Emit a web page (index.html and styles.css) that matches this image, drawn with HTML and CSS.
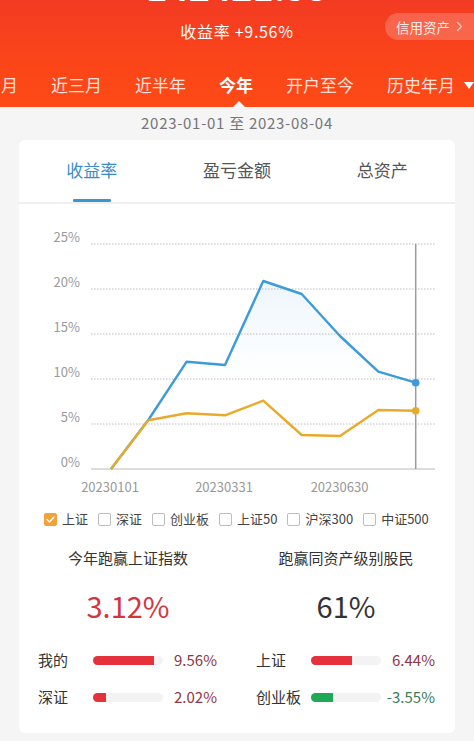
FILE: index.html
```html
<!DOCTYPE html>
<html lang="zh-CN">
<head>
<meta charset="utf-8">
<title>收益率</title>
<link rel="stylesheet" href="styles.css">
</head>
<body>
<header class="hero">
  <div class="hero-total">142421.53</div>
  <div class="hero-rate">收益率 +9.56%</div>
  <a class="credit-pill">信用资产<svg class="pill-arrow" width="7" height="11" viewBox="0 0 7 11"><path d="M1.5 1.5 L5.5 5.5 L1.5 9.5" fill="none" stroke="currentColor" stroke-width="1.4" stroke-linecap="round" stroke-linejoin="round"/></svg></a>
  <nav class="period-tabs">
    <span class="period">月</span>
    <span class="period">近三月</span>
    <span class="period">近半年</span>
    <span class="period active">今年</span>
    <span class="period">开户至今</span>
    <span class="period">历史年月<i class="drop"></i></span>
  </nav>
  <span class="tab-caret"></span>
</header>

<div class="range">2023-01-01 至 2023-08-04</div>

<section class="card">
  <div class="card-tabs">
    <div class="card-tab active">收益率</div>
    <div class="card-tab">盈亏金额</div>
    <div class="card-tab">总资产</div>
  </div>

  <svg class="chart" width="436" height="300" viewBox="0 0 436 300">
    <defs>
      <linearGradient id="areaFill" x1="0" y1="77" x2="0" y2="175" gradientUnits="userSpaceOnUse">
        <stop offset="0" stop-color="#3d9bd9" stop-opacity="0.09"/>
        <stop offset="1" stop-color="#3d9bd9" stop-opacity="0"/>
      </linearGradient>
    </defs>
    <g class="grid">
      <line x1="72" y1="40" x2="416" y2="40"/>
      <line x1="72" y1="85" x2="416" y2="85"/>
      <line x1="72" y1="130" x2="416" y2="130"/>
      <line x1="72" y1="175" x2="416" y2="175"/>
      <line x1="72" y1="220" x2="416" y2="220"/>
    </g>
    <line class="baseline" x1="72" y1="265" x2="416" y2="265"/>
    <g class="ylabels">
      <text x="61" y="37.5">25%</text>
      <text x="61" y="82.5">20%</text>
      <text x="61" y="127.5">15%</text>
      <text x="61" y="172.5">10%</text>
      <text x="61" y="217.5">5%</text>
      <text x="61" y="262.5">0%</text>
    </g>
    <polygon fill="url(#areaFill)" points="92,265 129.3,216 167.7,157.7 206,161 244.3,77 282.7,90 321,132 359.3,167.7 396.7,178.7 396.7,265"/>
    <line class="cursor" x1="396.7" y1="40" x2="396.7" y2="265"/>
    <polyline class="line-blue" points="92,265 129.3,216 167.7,157.7 206,161 244.3,77 282.7,90 321,132 359.3,167.7 396.7,178.7"/>
    <polyline class="line-orange" points="92,265 129.3,216.3 167.7,209.3 206,211.3 244.3,196.7 282.7,231 321,232 359.3,206 396.7,206.7"/>
    <circle cx="396.7" cy="178.7" r="3.8" fill="#3d9bd9"/>
    <circle cx="396.7" cy="206.7" r="3.8" fill="#e9aa2c"/>
    <g class="xlabels">
      <text x="91" y="287.5">20230101</text>
      <text x="205" y="287.5">20230331</text>
      <text x="320.5" y="287.5">20230630</text>
    </g>
  </svg>

  <div class="legend">
    <label class="legend-item"><span class="box checked"><svg width="9" height="7" viewBox="0 0 9 7"><path d="M1 3.5 L3.5 6 L8 1" fill="none" stroke="#fff" stroke-width="1.4" stroke-linecap="round" stroke-linejoin="round"/></svg></span>上证</label>
    <label class="legend-item"><span class="box"></span>深证</label>
    <label class="legend-item"><span class="box"></span>创业板</label>
    <label class="legend-item"><span class="box"></span>上证50</label>
    <label class="legend-item"><span class="box"></span>沪深300</label>
    <label class="legend-item"><span class="box"></span>中证500</label>
  </div>

  <div class="stats">
    <div class="stat-col">
      <div class="stat-title">今年跑赢上证指数</div>
      <div class="stat-big red">3.12%</div>
      <div class="bar-row">
        <span class="bar-label">我的</span>
        <span class="bar-track"><span class="bar-fill red-fill" style="width:87%"></span></span>
        <span class="bar-value">9.56%</span>
      </div>
      <div class="bar-row">
        <span class="bar-label">深证</span>
        <span class="bar-track"><span class="bar-fill red-fill" style="width:19%"></span></span>
        <span class="bar-value">2.02%</span>
      </div>
    </div>
    <div class="stat-col">
      <div class="stat-title">跑赢同资产级别股民</div>
      <div class="stat-big dark">61%</div>
      <div class="bar-row">
        <span class="bar-label">上证</span>
        <span class="bar-track"><span class="bar-fill red-fill" style="width:58%"></span></span>
        <span class="bar-value">6.44%</span>
      </div>
      <div class="bar-row">
        <span class="bar-label">创业板</span>
        <span class="bar-track"><span class="bar-fill green-fill" style="width:32%"></span></span>
        <span class="bar-value green">-3.55%</span>
      </div>
    </div>
  </div>
</section>
</body>
</html>
```

FILE: styles.css
```css
* { box-sizing: border-box; }

html, body {
  margin: 0;
  padding: 0;
}

body {
  width: 474px;
  height: 741px;
  overflow: hidden;
  background: #f5f5f5;
  font-family: "Noto Sans CJK SC", "Noto Sans", sans-serif;
  color: #333;
}

/* ---------- header ---------- */
.hero {
  position: relative;
  height: 107px;
  overflow: hidden;
  display: flex;
  flex-direction: column;
  align-items: center;
  background: linear-gradient(180deg, #f33b23 0%, #fb4518 60%, #fd4a16 100%);
  color: #fff;
}

.hero-total {
  margin-top: -33px;
  font-size: 36px;
  line-height: 36px;
  height: 36px;
  font-weight: 700;
}

.hero-rate {
  margin-top: 17px;
  font-size: 16px;
  line-height: 22px;
  letter-spacing: 0.7px;
}

.credit-pill {
  position: absolute;
  left: 385px;
  top: 13px;
  width: 110px;
  height: 27px;
  border-radius: 14px;
  background: rgba(255, 255, 255, 0.2);
  display: flex;
  align-items: center;
  padding-left: 11px;
  font-size: 13.5px;
  color: rgba(255, 255, 255, 0.9);
}

.pill-arrow {
  margin-left: 6px;
  opacity: 0.7;
}

.period-tabs {
  align-self: stretch;
  margin-top: 31px;
  display: flex;
  gap: 33px;
  padding-left: 1px;
  font-size: 17px;
  line-height: 24px;
  white-space: nowrap;
  color: rgba(255, 255, 255, 0.86);
}

.period.active {
  color: #fff;
  font-weight: 700;
}

.drop {
  display: inline-block;
  vertical-align: middle;
  margin-left: 9px;
  margin-top: -3px;
  width: 0;
  height: 0;
  border-left: 5px solid transparent;
  border-right: 5px solid transparent;
  border-top: 7px solid #fff;
}

.tab-caret {
  position: absolute;
  left: 233px;
  bottom: 0;
  width: 0;
  height: 0;
  border-left: 6px solid transparent;
  border-right: 6px solid transparent;
  border-bottom: 6px solid #f5f5f5;
}

/* ---------- date range ---------- */
.range {
  margin-top: 6px;
  text-align: center;
  font-size: 15px;
  line-height: 20px;
  letter-spacing: 0.7px;
  color: #777;
}

/* ---------- card ---------- */
.card {
  margin: 7px 19px 0;
  background: #fff;
  border-radius: 6px;
  overflow: hidden;
  padding-bottom: 25px;
}

.card-tabs {
  display: grid;
  grid-template-columns: repeat(3, 1fr);
  height: 64px;
  border-bottom: 2px solid #efefef;
}

.card-tab {
  display: flex;
  flex-direction: column;
  align-items: center;
  padding-top: 18px;
  font-size: 17px;
  line-height: 24px;
  color: #555;
}

.card-tab.active {
  color: #3a8ec3;
}

.card-tab.active::after {
  content: "";
  margin-top: auto;
  width: 38px;
  height: 3px;
  border-radius: 1px;
  background: #3a95d2;
}

/* ---------- chart ---------- */
.chart {
  display: block;
}

.grid line {
  stroke: #bdbdbd;
  stroke-width: 1;
  stroke-dasharray: 1.5 1.5;
}

.baseline {
  stroke: #d2d2d2;
  stroke-width: 1.5;
}

.cursor {
  stroke: #9c9c9c;
  stroke-width: 1.5;
}

.ylabels text {
  font-family: "Noto Sans CJK SC", "Noto Sans", sans-serif;
  font-size: 13px;
  fill: #9a9a9a;
  text-anchor: end;
}

.xlabels text {
  font-family: "Noto Sans CJK SC", "Noto Sans", sans-serif;
  font-size: 13px;
  fill: #999;
  text-anchor: middle;
}

.line-blue {
  fill: none;
  stroke: #3d9bd9;
  stroke-width: 2.4;
  stroke-linejoin: round;
}

.line-orange {
  fill: none;
  stroke: #e9aa2c;
  stroke-width: 2.4;
  stroke-linejoin: round;
}

/* ---------- legend ---------- */
.legend {
  margin-top: 5px;
  display: flex;
  gap: 10px;
  padding-left: 25px;
  font-size: 13px;
  line-height: 20px;
  color: #444;
  white-space: nowrap;
}

.legend-item {
  display: flex;
  align-items: center;
}

.box {
  width: 13px;
  height: 13px;
  margin-right: 5px;
  border: 1px solid #bdbdbd;
  border-radius: 2px;
  display: flex;
  align-items: center;
  justify-content: center;
}

.box.checked {
  background: #f1a33a;
  border-color: #f1a33a;
}

/* ---------- stats ---------- */
.stats {
  margin-top: 18px;
  display: grid;
  grid-template-columns: 1fr 1fr;
}

.stat-col {
  display: flex;
  flex-direction: column;
}

.stat-title {
  text-align: center;
  font-size: 15px;
  line-height: 22px;
  color: #333;
}

.stat-big {
  margin-top: 18px;
  text-align: center;
  font-size: 29px;
  line-height: 36px;
}

.stat-big.red { color: #d3353f; }
.stat-big.dark { color: #333; }

.bar-row {
  display: grid;
  grid-template-columns: 55px 70px 1fr;
  align-items: center;
  padding: 0 20px 0 19px;
  font-size: 15px;
  line-height: 22px;
  margin-top: 15px;
}

.stat-big + .bar-row {
  margin-top: 26px;
}

.bar-label {
  color: #333;
}

.bar-track {
  display: block;
  height: 9px;
  border-radius: 5px;
  background: #f3f3f3;
  overflow: hidden;
}

.bar-fill {
  display: block;
  height: 100%;
}

.red-fill { background: #e5313c; }
.green-fill { background: #1fa857; }

.bar-value {
  text-align: right;
  color: #8f3546;
}

.bar-value.green {
  color: #3a7c5c;
}
```
